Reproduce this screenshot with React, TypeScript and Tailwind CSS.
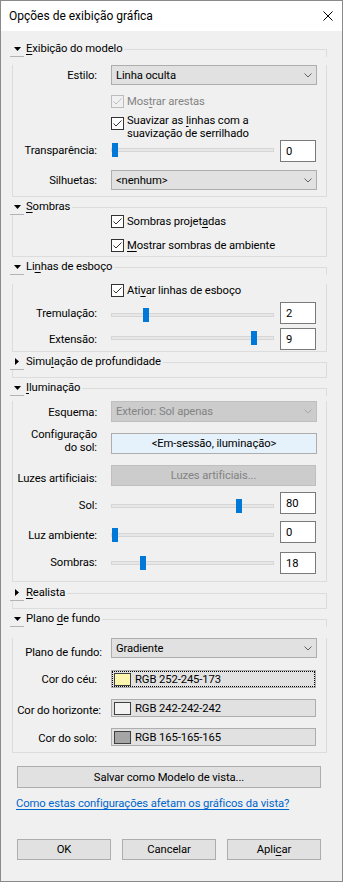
import React from "react";

type Kids = { children?: React.ReactNode };

const U = ({ children }: Kids) => <span className="underline underline-offset-[2px]">{children}</span>;

const Tri = ({ open }: { open: boolean }) =>
  open ? (
    <svg width="7" height="4" viewBox="0 0 7 4">
      <path d="M0 0h7L3.5 4z" fill="#000" />
    </svg>
  ) : (
    <svg width="4" height="7" viewBox="0 0 4 7">
      <path d="M0 0v7l4-3.5z" fill="#000" />
    </svg>
  );

function Section({
  title,
  open = true,
  className = "",
  bodyClass = "",
  children,
}: Kids & { title: React.ReactNode; open?: boolean; className?: string; bodyClass?: string }) {
  return (
    <div className={className}>
      <div className="flex h-[16px]">
        <div className="-ml-[2px] flex h-[16px] w-[14px] shrink-0 items-center justify-center border-b border-[#b4b4b4]">
          <Tri open={open} />
        </div>
        <div className="px-[2px] leading-[16px]">{title}</div>
        <div className="mt-[8px] h-[8px] flex-1 border-t border-r border-[#dcdcdc]" />
      </div>
      <div className={`border-x border-b border-[#dcdcdc] ${bodyClass}`}>{children}</div>
    </div>
  );
}

const Label = ({ children, className = "" }: Kids & { className?: string }) => (
  <div className={`shrink-0 text-right leading-[13px] ${className}`}>{children}</div>
);

function Select({ value, disabled, className = "" }: { value: string; disabled?: boolean; className?: string }) {
  return (
    <div
      className={`flex w-[206px] items-center justify-between border pl-[4px] pr-[4px] ${
        disabled ? "border-[#bfbfbf] bg-[#cccccc] text-[#838383]" : "border-[#adadad] bg-[#e1e1e1]"
      } ${className}`}
    >
      <span className="leading-[13px]">{value}</span>
      <svg width="8" height="5" viewBox="0 0 8 5">
        <path d="M0.5 0.5L4 4L7.5 0.5" fill="none" stroke={disabled ? "#a8a8a8" : "#606060"} />
      </svg>
    </div>
  );
}

function Check({ disabled, className = "" }: { disabled?: boolean; className?: string }) {
  return (
    <div
      className={`flex h-[13px] w-[13px] shrink-0 items-center justify-center border ${
        disabled ? "border-[#bcbcbc]" : "border-[#333333] bg-white"
      } ${className}`}
    >
      <svg width="11" height="11" viewBox="0 0 11 11">
        <path d="M1.5 5.5L4 8L9.5 2.5" fill="none" stroke={disabled ? "#bcbcbc" : "#333333"} />
      </svg>
    </div>
  );
}

function CheckRow({
  children,
  disabled,
  className = "",
  boxClass = "",
}: Kids & { disabled?: boolean; className?: string; boxClass?: string }) {
  return (
    <div className={`ml-[98px] flex items-start gap-[3px] ${className}`}>
      <Check disabled={disabled} className={boxClass} />
      <div className={`leading-[13px] ${disabled ? "text-[#838383]" : ""}`}>{children}</div>
    </div>
  );
}

function SliderRow({
  label,
  value,
  thumb,
  className = "",
  labelClass = "",
  sliderClass = "",
}: {
  label: string;
  value: string;
  thumb: number;
  className?: string;
  labelClass?: string;
  sliderClass?: string;
}) {
  return (
    <div className={`flex items-start ${className}`}>
      <Label className={`mr-[14px] w-[84px] ${labelClass}`}>{label}</Label>
      <div className={`relative flex h-[14px] w-[163px] items-center ${sliderClass}`}>
        <div className="h-[4px] w-full border border-[#d6d6d6] bg-[#e7e7e7]" />
        <div className="absolute top-0 h-[14px] w-[6px] bg-[#0078d7]" style={{ left: thumb }} />
      </div>
      <div className="ml-[6px] h-[22px] w-[36px] border border-[#7a7a7a] bg-white pl-[5px] pt-[4px] leading-[13px]">
        {value}
      </div>
    </div>
  );
}

function ColorField({ swatch, text, focus }: { swatch: string; text: string; focus?: boolean }) {
  return (
    <div className="h-[18px] w-[205px] border border-[#adadad] bg-[#e1e1e1]">
      <div className={`flex h-full items-center border ${focus ? "border-dotted border-black" : "border-transparent"}`}>
        <div className={`ml-[1px] h-[13px] w-[17px] border border-[#404040] ${swatch}`} />
        <span className="ml-[4px] leading-[13px]">{text}</span>
      </div>
    </div>
  );
}

const Btn = ({ children, className = "" }: Kids & { className?: string }) => (
  <div className={`flex items-center justify-center border border-[#adadad] bg-[#e1e1e1] leading-[13px] ${className}`}>
    {children}
  </div>
);

export default function App() {
  return (
    <div className="h-[883px] w-[343px] bg-white font-['Roboto',sans-serif] text-[11.25px] tracking-[-0.1px] text-black">
      <div className="flex h-[882px] w-[343px] flex-col border border-[#8a8a8a]">
        {/* title bar */}
        <div className="flex h-[30px] shrink-0 items-center justify-between bg-white pl-[8px] pr-[9px]">
          <span className="text-[12px] tracking-normal">Opções de exibição gráfica</span>
          <svg width="10" height="10" viewBox="0 0 10 10">
            <path d="M0.5 0.5L9.5 9.5M9.5 0.5L0.5 9.5" stroke="#000" strokeWidth="1" />
          </svg>
        </div>

        <div className="flex-1 bg-[#f0f0f0] pl-[11px] pr-[15px] pt-[10px]">
          <Section
            title={
              <>
                <U>E</U>xibição do modelo
              </>
            }
            bodyClass="pb-[6px]"
          >
            <div className="mt-[8px] flex items-start">
              <Label className="mr-[14px] mt-[4px] w-[84px]">Estilo:</Label>
              <Select value="Linha oculta" className="h-[20px]" />
            </div>
            <CheckRow disabled className="mt-[10px]">
              Mos<U>t</U>rar arestas
            </CheckRow>
            <CheckRow className="mt-[6px]" boxClass="mt-[3px]">
              Suavizar as <U>l</U>inhas com a<br />
              suavização de serrilhado
            </CheckRow>
            <SliderRow label="Transparência:" value="0" thumb={1} labelClass="mt-[4px]" sliderClass="mt-[3px]" />
            <div className="mt-[8px] flex items-start">
              <Label className="mr-[14px] mt-[4px] w-[84px]">Silhuetas:</Label>
              <Select value="<nenhum>" className="h-[20px]" />
            </div>
          </Section>

          <Section
            className="mt-[2px]"
            title={
              <>
                <U>S</U>ombras
              </>
            }
            bodyClass="pb-[4px]"
          >
            <CheckRow>
              Sombras projet<U>a</U>das
            </CheckRow>
            <CheckRow className="mt-[11px]">
              <U>M</U>ostrar sombras de ambiente
            </CheckRow>
          </Section>

          <Section
            className="mt-[2px]"
            title={
              <>
                Li<U>n</U>has de esboço
              </>
            }
            bodyClass="pb-[1px]"
          >
            <CheckRow className="mt-[9px]">
              Ati<U>v</U>ar linhas de esboço
            </CheckRow>
            <SliderRow
              className="mt-[5px]"
              label="Tremulação:"
              value="2"
              thumb={32}
              labelClass="mt-[5px]"
              sliderClass="mt-[6px]"
            />
            <SliderRow
              className="mt-[4px]"
              label="Extensão:"
              value="9"
              thumb={140}
              labelClass="mt-[5px]"
              sliderClass="mt-[3px]"
            />
          </Section>

          <Section
            className="mt-[2px]"
            open={false}
            title={
              <>
                Simu<U>l</U>ação de profundidade
              </>
            }
            bodyClass="h-[8px]"
          />

          <Section
            className="mt-[2px]"
            title={
              <>
                <U>I</U>luminação
              </>
            }
            bodyClass="pb-[7px]"
          >
            <div className="mt-[5px] flex items-start">
              <Label className="mr-[14px] mt-[5px] w-[84px]">Esquema:</Label>
              <Select value="Exterior: Sol apenas" disabled className="h-[21px]" />
            </div>
            <div className="mt-[6px] flex items-start">
              <Label className="mr-[14px] w-[84px]">
                Configuração
                <br />
                do sol:
              </Label>
              <Btn className="mt-[5px] h-[21px] w-[206px] border-[#0078d7] bg-[#e5f1fb]">
                &lt;Em-sessão, iluminação&gt;
              </Btn>
            </div>
            <div className="mt-[11px] flex items-start">
              <Label className="mr-[14px] mt-[7px] w-[84px]">Luzes artificiais:</Label>
              <div className="flex h-[21px] w-[205px] items-center justify-center border border-[#bfbfbf] bg-[#cccccc] leading-[13px] text-[#838383]">
                Luzes artificiais...
              </div>
            </div>
            <SliderRow
              className="mt-[6px]"
              label="Sol:"
              value="80"
              thumb={125}
              labelClass="mt-[7px]"
              sliderClass="mt-[7px]"
            />
            <SliderRow
              className="mt-[7px]"
              label="Luz ambiente:"
              value="0"
              thumb={1}
              labelClass="mt-[8px]"
              sliderClass="mt-[7px]"
            />
            <SliderRow
              className="mt-[9px]"
              label="Sombras:"
              value="18"
              thumb={29}
              labelClass="mt-[4px]"
              sliderClass="mt-[4px]"
            />
          </Section>

          <Section
            className="mt-[3px]"
            open={false}
            title={
              <>
                <U>R</U>ealista
              </>
            }
            bodyClass="h-[8px]"
          />

          <Section
            className="mt-[2px]"
            title={
              <>
                Plano <U>d</U>e fundo
              </>
            }
            bodyClass="pb-[6px]"
          >
            <div className="mt-[11px] flex items-start">
              <Label className="mr-[9px] mt-[8px] w-[89px]">Plano de fundo:</Label>
              <Select value="Gradiente" className="h-[20px]" />
            </div>
            <div className="mt-[11px] flex items-start">
              <Label className="mr-[14px] mt-[3px] w-[84px]">Cor do céu:</Label>
              <ColorField swatch="bg-[#fcf5ad]" text="RGB 252-245-173" focus />
            </div>
            <div className="mt-[11px] flex items-start">
              <Label className="mr-[10px] mt-[5px] w-[88px]">Cor do horizonte:</Label>
              <ColorField swatch="bg-[#f2f2f2]" text="RGB 242-242-242" />
            </div>
            <div className="mt-[11px] flex items-start">
              <Label className="mr-[14px] mt-[4px] w-[84px]">Cor do solo:</Label>
              <ColorField swatch="bg-[#a5a5a5]" text="RGB 165-165-165" />
            </div>
          </Section>

          <Btn className="ml-[5px] mt-[13px] h-[22px] w-[304px]">Salvar como Modelo de vista...</Btn>
          <div className="ml-[4px] mt-[9px] leading-[13px] text-[#0066cc] underline underline-offset-[2px]">
            Como estas configurações afetam os gráficos da vista?
          </div>
          <div className="ml-[5px] mt-[29px] flex gap-[11px]">
            <Btn className="h-[21px] w-[94px]">OK</Btn>
            <Btn className="h-[21px] w-[94px]">Cancelar</Btn>
            <Btn className="h-[21px] w-[94px]">
              Apli<U>c</U>ar
            </Btn>
          </div>
        </div>
      </div>
    </div>
  );
}
